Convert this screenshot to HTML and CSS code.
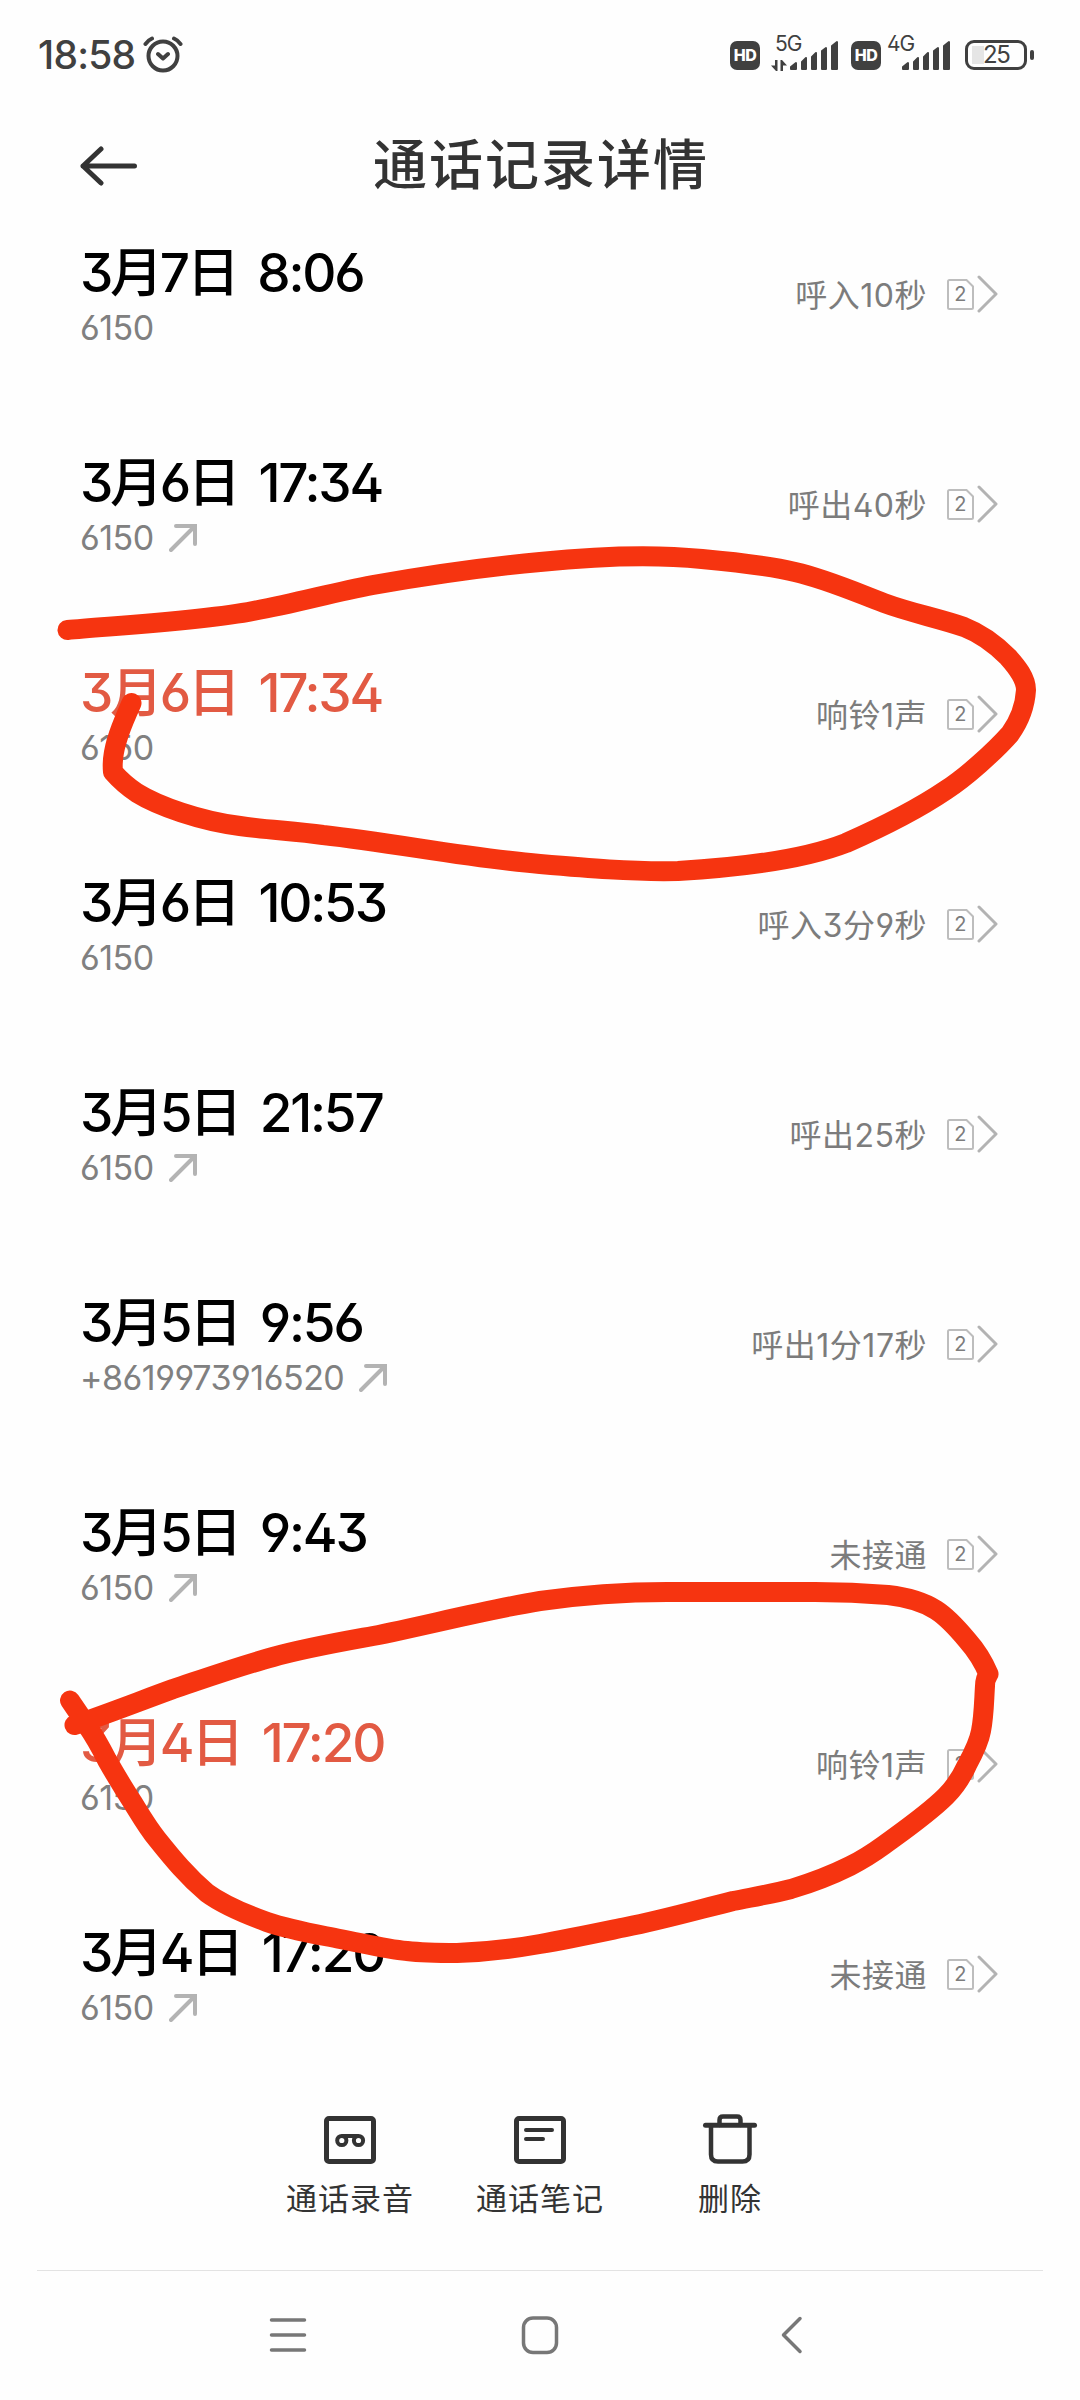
FILE: index.html
```html
<!DOCTYPE html>
<html lang="zh-CN">
<head>
    <meta charset="UTF-8">
    <meta name="viewport" content="width=device-width, initial-scale=1.0">
    <title>通话记录详情</title>
    <link rel="stylesheet" href="styles.css">
</head>
<body>

<!-- Shared icons -->
<svg class="sprite" width="0" height="0">
    <symbol id="out" viewBox="0 0 28 28">
        <path d="M2 26L25.500 2.500M7 2H26V20" fill="none" stroke="#b3b3b3" stroke-width="4" stroke-linecap="round"/>
    </symbol>
    <symbol id="chevron" viewBox="0 0 21 38">
        <path d="M2 2L19 19L2 36" fill="none" stroke="#b3b3b3" stroke-width="3" stroke-linecap="round" stroke-linejoin="round"/>
    </symbol>
    <symbol id="sim" viewBox="0 0 27 31">
        <path d="M2.500 1H19.500L26 7.500V28.500Q26 30 24.500 30H2.500Q1 30 1 28.500V2.500Q1 1 2.500 1Z" fill="none" stroke="#bdbdbd" stroke-width="2"/>
    </symbol>
    <symbol id="bars" viewBox="0 0 49 31">
        <path d="M1 29V27L6 23V29ZM12 29V22L16 18V29ZM22 29V17L26 13V29ZM32 29V11L36 8V29ZM42 29V6L47 2V29Z" fill="#404040" stroke="#404040" stroke-width="2" stroke-linejoin="round"/>
    </symbol>
</svg>

<!-- Status bar -->
<div class="status">
    <span class="clock">18:58</span>
    <svg class="alarm" width="40" height="38" viewBox="0 0 40 38">
        <g fill="none" stroke="#404040" stroke-width="4" stroke-linecap="round" stroke-linejoin="round">
            <circle cx="20" cy="20" r="14.500"/>
            <path d="M15 18L20 22.500L25 18M2.500 8Q4.500 4.500 9 2.500M31 2.500Q35.500 4.500 37.500 8"/>
        </g>
    </svg>
    <div class="signals">
        <span class="hd">HD</span>
        <div class="network">
            <span class="gen">5G</span>
            <svg class="data" width="16" height="11" viewBox="0 0 16 11">
                <path d="M4 0H6.500V11H5L0 5.500H4ZM9.500 0H11L16 5.500H12V11H9.500Z" fill="#404040"/>
            </svg>
            <svg width="49" height="31"><use href="#bars"/></svg>
        </div>
        <span class="hd">HD</span>
        <div class="network network-4g">
            <span class="gen">4G</span>
            <svg width="49" height="31"><use href="#bars"/></svg>
        </div>
        <div class="battery"><span class="level"></span><span class="percent">25</span></div>
        <span class="nub"></span>
    </div>
</div>

<!-- Header -->
<div class="header">
    <svg class="back" width="58" height="40" viewBox="0 0 58 40">
        <path d="M21 3L3 20L21 37M3 20H54.500" fill="none" stroke="#333" stroke-width="5" stroke-linecap="round" stroke-linejoin="round"/>
    </svg>
    <h1>通话记录详情</h1>
</div>

<!-- Call list -->
<div class="calls">
    <div class="call">
        <div class="info">
            <div class="date">3月7日 <span>8:06</span></div>
            <div class="number">6150</div>
        </div>
        <div class="detail">呼入10秒<div class="sim"><svg width="27" height="31"><use href="#sim"/></svg><span>2</span></div><svg width="21" height="38"><use href="#chevron"/></svg></div>
    </div>
    <div class="call">
        <div class="info">
            <div class="date">3月6日 <span>17:34</span></div>
            <div class="number">6150<svg width="28" height="28"><use href="#out"/></svg></div>
        </div>
        <div class="detail">呼出40秒<div class="sim"><svg width="27" height="31"><use href="#sim"/></svg><span>2</span></div><svg width="21" height="38"><use href="#chevron"/></svg></div>
    </div>
    <div class="call missed">
        <div class="info">
            <div class="date">3月6日 <span>17:34</span></div>
            <div class="number">6150</div>
        </div>
        <div class="detail">响铃1声<div class="sim"><svg width="27" height="31"><use href="#sim"/></svg><span>2</span></div><svg width="21" height="38"><use href="#chevron"/></svg></div>
    </div>
    <div class="call">
        <div class="info">
            <div class="date">3月6日 <span>10:53</span></div>
            <div class="number">6150</div>
        </div>
        <div class="detail">呼入3分9秒<div class="sim"><svg width="27" height="31"><use href="#sim"/></svg><span>2</span></div><svg width="21" height="38"><use href="#chevron"/></svg></div>
    </div>
    <div class="call">
        <div class="info">
            <div class="date">3月5日 <span>21:57</span></div>
            <div class="number">6150<svg width="28" height="28"><use href="#out"/></svg></div>
        </div>
        <div class="detail">呼出25秒<div class="sim"><svg width="27" height="31"><use href="#sim"/></svg><span>2</span></div><svg width="21" height="38"><use href="#chevron"/></svg></div>
    </div>
    <div class="call">
        <div class="info">
            <div class="date">3月5日 <span>9:56</span></div>
            <div class="number">+8619973916520<svg width="28" height="28"><use href="#out"/></svg></div>
        </div>
        <div class="detail">呼出1分17秒<div class="sim"><svg width="27" height="31"><use href="#sim"/></svg><span>2</span></div><svg width="21" height="38"><use href="#chevron"/></svg></div>
    </div>
    <div class="call">
        <div class="info">
            <div class="date">3月5日 <span>9:43</span></div>
            <div class="number">6150<svg width="28" height="28"><use href="#out"/></svg></div>
        </div>
        <div class="detail">未接通<div class="sim"><svg width="27" height="31"><use href="#sim"/></svg><span>2</span></div><svg width="21" height="38"><use href="#chevron"/></svg></div>
    </div>
    <div class="call missed">
        <div class="info">
            <div class="date">3月4日 <span>17:20</span></div>
            <div class="number">6150</div>
        </div>
        <div class="detail">响铃1声<div class="sim"><svg width="27" height="31"><use href="#sim"/></svg><span>2</span></div><svg width="21" height="38"><use href="#chevron"/></svg></div>
    </div>
    <div class="call">
        <div class="info">
            <div class="date">3月4日 <span>17:20</span></div>
            <div class="number">6150<svg width="28" height="28"><use href="#out"/></svg></div>
        </div>
        <div class="detail">未接通<div class="sim"><svg width="27" height="31"><use href="#sim"/></svg><span>2</span></div><svg width="21" height="38"><use href="#chevron"/></svg></div>
    </div>
</div>

<!-- Bottom actions -->
<div class="actions">
    <div class="action">
        <svg width="56" height="52" viewBox="0 0 56 52">
            <g fill="none" stroke="#333" stroke-width="5">
                <rect x="4.500" y="4.500" width="47" height="43" rx="2.500"/>
                <g stroke-width="4"><circle cx="19.800" cy="26.500" r="4.600"/><circle cx="36.500" cy="26.500" r="4.600"/><path d="M19.800 22H36.500"/></g>
            </g>
        </svg>
        通话录音
    </div>
    <div class="action">
        <svg width="56" height="52" viewBox="0 0 56 52">
            <g fill="none" stroke="#333" stroke-width="5">
                <rect x="4.500" y="4.500" width="47" height="43" rx="2.500"/>
                <path d="M14 16H40M14 25H31" stroke-width="4" stroke-linecap="round"/>
            </g>
        </svg>
        通话笔记
    </div>
    <div class="action">
        <svg width="56" height="52" viewBox="0 0 56 52">
            <g fill="none" stroke="#333" stroke-width="5" stroke-linecap="round">
                <path d="M3.500 11.300H52.500"/>
                <path d="M9 12V40.500Q9 47.500 16 47.500H40.500Q47.500 47.500 47.500 40.500V12M17.500 11V6Q17.500 2.500 21 2.500H35Q38.500 2.500 38.500 6V11" stroke-width="4.500"/>
            </g>
        </svg>
        删除
    </div>
</div>

<!-- Navigation bar -->
<div class="nav">
    <svg width="40" height="40" viewBox="0 0 40 40"><path d="M3.500 5H36.500M3.500 20H36.500M3.500 35H36.500" fill="none" stroke="#777" stroke-width="3.500" stroke-linecap="round"/></svg>
    <svg width="40" height="40" viewBox="0 0 40 40"><rect x="3.500" y="3" width="33" height="34.500" rx="9.500" fill="none" stroke="#777" stroke-width="3.500"/></svg>
    <svg width="40" height="40" viewBox="0 0 40 40"><path d="M28 3.500L11.500 20L28 36.500" fill="none" stroke="#777" stroke-width="3.500" stroke-linecap="round" stroke-linejoin="round"/></svg>
</div>

<!-- Pen marks over the missed calls -->
<svg class="marks" width="1080" height="2400" viewBox="0 0 1080 2400">
    <path d="M67.500 630C110 626 203 621 253 611C298 603 330 593 373 585C430 575 485 567 540 562C598 556 655 554 702 559C735 562 765 565 795 572C826 579 855 592 884 603C911 613 938 618 964 627C982 634 996 645 1008 657C1017 667 1026 678 1026 690C1025 707 1020 720 1010 734C994 752 966 777 946 790C915 811 880 828 846 843C800 861 730 868 678 871C632 872 586 868 540 864C468 858 395 843 323 835C295 831 268 830 240 826C200 821 158 806 137 793C128 787 120 780 113 772C112 762 113 753 117 740C121 726 126 716 131.500 703"/>
    <path d="M70 1700.500L87 1725.500C95 1737 101 1748 107 1760C116 1776 124 1789 133 1803C141 1816 148 1828 157 1839C173 1859 187 1876 207 1893C222 1904 245 1914 267 1922C290 1930 315 1934 340 1939C362 1943 385 1949 407 1951C424 1953 441 1953 457 1953C485 1952 512 1949 540 1944C569 1939 597 1933 626 1927C662 1920 697 1910 733 1901C753 1897 772 1894 791 1889C811 1883 832 1875 850 1866C862 1860 873 1853 884 1845C906 1829 929 1813 946 1796C955 1787 962 1776 967 1765C973 1754 979 1742 981 1731C984 1716 984 1701 985 1686Q985 1679 988.500 1674C983 1661 975 1649 967 1640C957 1628 947 1617 936 1610C922 1601 905 1597 888 1595C864 1593 840 1592 815 1592L667 1592C625 1592 582 1595 540 1601C485 1610 428 1625 373 1636C340 1642 305 1648 273 1657C240 1666 206 1678 173 1689C140 1701 107 1714 74.500 1725"/>
</svg>

</body>
</html>
```

FILE: styles.css
```css
* {
    box-sizing: border-box;
}
body {
    margin: 0;
    width: 1080px;
    height: 2400px;
    display: flex;
    flex-direction: column;
    position: relative;
    overflow: hidden;
    background-color: #fefefe;
    font-family: Inter, "Noto Sans CJK SC", sans-serif;
    font-feature-settings: "cv02", "cv03", "cv04", "cv09";
    color: #333;
}
svg {
    display: block;
    flex: none;
}
.sprite {
    position: absolute;
}

/* Status bar */
.status {
    display: flex;
    align-items: center;
    height: 110px;
    padding: 0 46px 0 38px;
    color: #404040;
}
.clock {
    font-size: 39px;
    font-weight: 450;
    line-height: 50px;
    letter-spacing: -0.8px;
    width: 105px;
}
.signals {
    display: flex;
    align-items: center;
    margin-left: auto;
}
.hd {
    width: 30px;
    height: 29px;
    border-radius: 7px;
    background-color: #404040;
    color: #fff;
    font-size: 16px;
    font-weight: 800;
    line-height: 29px;
    letter-spacing: -0.5px;
    text-align: center;
}
.network {
    display: flex;
    align-items: flex-end;
    justify-content: flex-end;
    gap: 3px;
    position: relative;
    width: 79px;
    margin-right: 12px;
}
.network-4g {
    width: 70px;
    margin-right: 14px;
}
.gen {
    position: absolute;
    left: 15px;
    top: -8px;
    font-size: 21px;
    line-height: 24px;
    letter-spacing: -1px;
}
.network-4g .gen {
    left: 6px;
}
.battery {
    display: flex;
    align-items: center;
    width: 62px;
    height: 30px;
    border: 3px solid #404040;
    border-radius: 9px;
    padding-left: 4px;
}
.level {
    width: 12px;
    height: 18px;
    background-color: #e5e5e5;
}
.percent {
    font-size: 24px;
    line-height: 24px;
    letter-spacing: -1.5px;
    margin-left: -1px;
}
.nub {
    width: 4px;
    height: 10px;
    margin-left: 3px;
    border-radius: 2px;
    background-color: #404040;
}

/* Header */
.header {
    display: flex;
    align-items: center;
    height: 120px;
    padding: 0 80px 9px;
}
.header h1 {
    flex: 1;
    margin: 0 56px 0 0;
    font-size: 54px;
    font-weight: 500;
    line-height: 80px;
    letter-spacing: 2px;
    text-align: center;
}

/* Call list */
.calls {
    height: 1860px;
}
.call {
    display: flex;
    justify-content: space-between;
    align-items: flex-start;
    height: 210px;
    padding: 0 82px 0 80px;
}
.info {
    padding-top: 13px;
}
.date {
    font-size: 53px;
    font-weight: 500;
    line-height: 60px;
    letter-spacing: -3.3px;
    word-spacing: 10px;
    color: #000;
}
.date span {
    letter-spacing: -2.2px;
}
.missed .date {
    color: #e25a43;
}
.number {
    display: flex;
    align-items: center;
    gap: 15px;
    font-size: 34px;
    font-weight: 380;
    line-height: 50px;
    letter-spacing: -0.5px;
    color: #808080;
}
.detail {
    display: flex;
    align-items: center;
    height: 128px;
    padding-bottom: 2px;
    font-size: 32px;
    font-weight: 380;
    letter-spacing: 0.5px;
    color: #7c7c7c;
}
.detail svg,
.sim {
    margin-top: 1px;
}
.sim {
    position: relative;
    margin-left: 20px;
    margin-right: 3px;
}
.sim span {
    position: absolute;
    inset: 0;
    font-size: 20px;
    font-weight: 400;
    line-height: 32px;
    text-align: center;
}

/* Bottom actions */
.actions {
    display: flex;
    justify-content: center;
    height: 181px;
    padding-top: 24px;
    border-bottom: 1px solid #e3e3e3;
    margin: 0 37px;
}
.action {
    display: flex;
    flex-direction: column;
    align-items: center;
    gap: 9px;
    width: 190px;
    font-size: 31px;
    line-height: 48px;
    letter-spacing: 1px;
}

/* Navigation bar */
.nav {
    display: flex;
    justify-content: center;
    gap: 212px;
    padding-top: 44px;
}

.marks {
    position: absolute;
    left: 0;
    top: 0;
    fill: none;
    stroke: #f63410;
    stroke-width: 20px;
    stroke-linecap: round;
    stroke-linejoin: round;
}
```
